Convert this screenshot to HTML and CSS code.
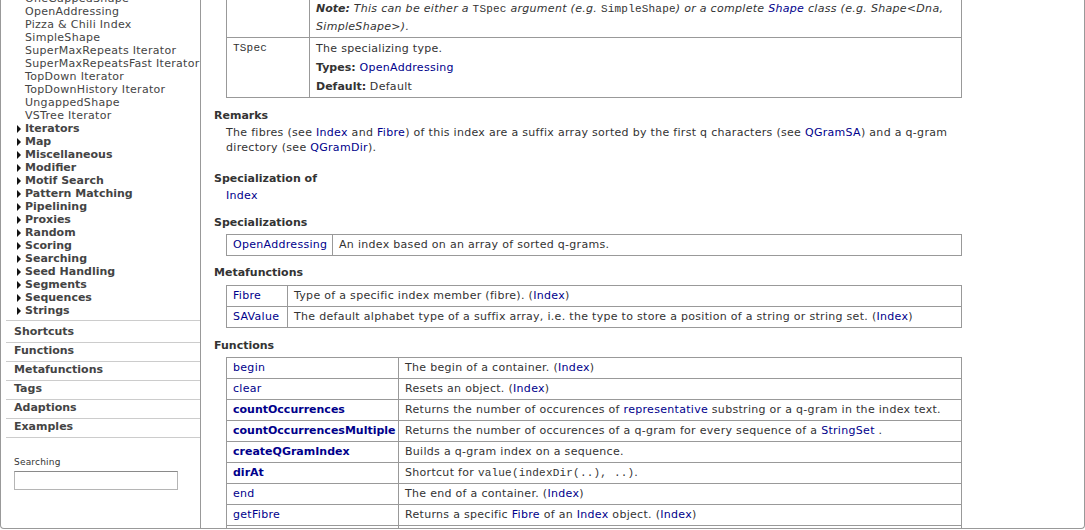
FILE: index.html
```html
<!DOCTYPE html>
<html>
<head>
<meta charset="utf-8">
<link rel="stylesheet" href="styles.css">
</head>
<body>
<div class="frame">
  <aside class="sidebar">
    <ul class="tree">
      <li>OneGappedShape</li>
      <li>OpenAddressing</li>
      <li>Pizza &amp; Chili Index</li>
      <li>SimpleShape</li>
      <li>SuperMaxRepeats Iterator</li>
      <li>SuperMaxRepeatsFast Iterator</li>
      <li>TopDown Iterator</li>
      <li>TopDownHistory Iterator</li>
      <li>UngappedShape</li>
      <li>VSTree Iterator</li>
      <li class="cat">Iterators</li>
      <li class="cat">Map</li>
      <li class="cat">Miscellaneous</li>
      <li class="cat">Modifier</li>
      <li class="cat">Motif Search</li>
      <li class="cat">Pattern Matching</li>
      <li class="cat">Pipelining</li>
      <li class="cat">Proxies</li>
      <li class="cat">Random</li>
      <li class="cat">Scoring</li>
      <li class="cat">Searching</li>
      <li class="cat">Seed Handling</li>
      <li class="cat">Segments</li>
      <li class="cat">Sequences</li>
      <li class="cat">Strings</li>
    </ul>
    <ul class="sections">
      <li>Shortcuts</li>
      <li>Functions</li>
      <li>Metafunctions</li>
      <li>Tags</li>
      <li>Adaptions</li>
      <li>Examples</li>
    </ul>
    <div class="search">
      <label class="search-label">Searching</label>
      <input class="search-input" type="text">
    </div>
  </aside>
  <main class="main">
    <table class="tbl params">
      <colgroup><col class="c-param"><col></colgroup>
      <tr>
        <td class="name"></td>
        <td class="desc"><div class="note"><b>Note:</b> This can be either a <code>TSpec</code> argument (e.g. <code>SimpleShape</code>) or a complete <a href="#">Shape</a> class (e.g. Shape&lt;Dna, SimpleShape&gt;).</div></td>
      </tr>
      <tr>
        <td class="name"><code>TSpec</code></td>
        <td class="desc">
          <div class="line">The specializing type.</div>
          <div class="line kv"><b>Types:</b> <a href="#">OpenAddressing</a></div>
          <div class="line kv"><b>Default:</b> Default</div>
        </td>
      </tr>
    </table>

    <section class="sec">
      <h3 class="sec-title">Remarks</h3>
      <p class="para">The fibres (see <a href="#">Index</a> and <a href="#">Fibre</a>) of this index are a suffix array sorted by the first q characters (see <a href="#">QGramSA</a>) and a q-gram directory (see <a href="#">QGramDir</a>).</p>
    </section>

    <section class="sec">
      <h3 class="sec-title">Specialization of</h3>
      <div class="single"><a href="#">Index</a></div>
    </section>

    <section class="sec">
      <h3 class="sec-title">Specializations</h3>
      <table class="tbl list">
        <colgroup><col class="c-spec"><col></colgroup>
        <tr><td><a href="#">OpenAddressing</a></td><td>An index based on an array of sorted q-grams.</td></tr>
      </table>
    </section>

    <section class="sec sec-tight">
      <h3 class="sec-title">Metafunctions</h3>
      <table class="tbl list">
        <colgroup><col class="c-meta"><col></colgroup>
        <tr><td><a href="#">Fibre</a></td><td>Type of a specific index member (fibre). (<a href="#">Index</a>)</td></tr>
        <tr><td><a href="#">SAValue</a></td><td>The default alphabet type of a suffix array, i.e. the type to store a position of a string or string set. (<a href="#">Index</a>)</td></tr>
      </table>
    </section>

    <section class="sec">
      <h3 class="sec-title">Functions</h3>
      <table class="tbl list">
        <colgroup><col class="c-func"><col></colgroup>
        <tr><td><a href="#">begin</a></td><td>The begin of a container. (<a href="#">Index</a>)</td></tr>
        <tr><td><a href="#">clear</a></td><td>Resets an object. (<a href="#">Index</a>)</td></tr>
        <tr><td><a class="strong" href="#">countOccurrences</a></td><td>Returns the number of occurences of <a href="#">representative</a> substring or a q-gram in the index text.</td></tr>
        <tr><td><a class="strong" href="#">countOccurrencesMultiple</a></td><td>Returns the number of occurences of a q-gram for every sequence of a <a href="#">StringSet</a> .</td></tr>
        <tr><td><a class="strong" href="#">createQGramIndex</a></td><td>Builds a q-gram index on a sequence.</td></tr>
        <tr><td><a class="strong" href="#">dirAt</a></td><td>Shortcut for <code>value(indexDir(..), ..)</code>.</td></tr>
        <tr><td><a href="#">end</a></td><td>The end of a container. (<a href="#">Index</a>)</td></tr>
        <tr><td><a href="#">getFibre</a></td><td>Returns a specific <a href="#">Fibre</a> of an <a href="#">Index</a> object. (<a href="#">Index</a>)</td></tr>
        <tr><td>&nbsp;</td><td>&nbsp;</td></tr>
      </table>
    </section>
  </main>
</div>
</body>
</html>
```

FILE: styles.css
```css
html, body {
  margin: 0;
  padding: 0;
  height: 100%;
  overflow: hidden;
  background: #fff;
}

body {
  font-family: "DejaVu Sans", Verdana, sans-serif;
  font-size: 11px;
  letter-spacing: 0.3px;
  color: #333;
}

b, strong {
  letter-spacing: 0;
}

a {
  color: #00008b;
  text-decoration: none;
}

a.strong {
  font-weight: bold;
  letter-spacing: 0;
}

code {
  font-family: "Liberation Mono", "Courier New", monospace;
  font-size: 11px;
  font-style: normal;
  letter-spacing: 0.2px;
}

.frame {
  display: flex;
  width: 1085px;
  height: 529px;
  box-sizing: border-box;
  border: 1px solid #999;
  border-top: none;
  border-radius: 0 0 4px 4px;
  overflow: hidden;
}

/* ---------- sidebar ---------- */
.sidebar {
  flex: 0 0 200px;
  box-sizing: border-box;
  border-right: 1px solid #999;
  color: #444;
}

.tree {
  list-style: none;
  margin: -8px 0 0;
  padding: 0 0 0 24px;
  line-height: 13px;
}

.tree li {
  white-space: nowrap;
}

.tree .cat {
  display: flex;
  align-items: center;
  gap: 4px;
  margin-left: -8px;
  font-weight: bold;
  letter-spacing: 0;
}

.tree .cat::before {
  content: "";
  width: 0;
  height: 0;
  border-top: 4px solid transparent;
  border-bottom: 4px solid transparent;
  border-left: 4px solid #111;
}

.sections {
  list-style: none;
  margin: 3px 0 0 5px;
  padding: 3px 0 0;
  border-top: 1px solid #ccc;
}

.sections li {
  padding: 1px 0 3px 8px;
  line-height: 14px;
  font-weight: bold;
  letter-spacing: 0;
  border-bottom: 1px solid #ccc;
}

.search {
  display: flex;
  flex-direction: column;
  align-items: flex-start;
  padding: 18px 0 0 13px;
}

.search-label {
  font-size: 9px;
  line-height: 12px;
  color: #333;
  letter-spacing: 0.2px;
}

.search-input {
  margin: 3px 0 0;
  width: 164px;
  height: 19px;
  box-sizing: border-box;
  border: 1px solid #b5b5b5;
  border-top-color: #8a8a8a;
  padding: 0 2px;
  font: inherit;
}

/* ---------- main ---------- */
.main {
  flex: 1;
  min-width: 0;
  padding-left: 13px;
}

.tbl {
  border-collapse: collapse;
  table-layout: fixed;
  width: 736px;
  margin-left: 12px;
}

.tbl td {
  border: 1px solid #999;
  padding: 3px 6px;
  line-height: 14px;
  vertical-align: top;
}

.params {
  margin-top: -4px;
}

.c-param { width: 83px; }
.c-spec  { width: 106px; }
.c-meta  { width: 61px; }
.c-func  { width: 172px; }

.note {
  font-style: italic;
  line-height: 17px;
  margin-bottom: -1px;
}

.params .line {
  line-height: 15px;
}

.params .kv {
  margin-top: 4px;
}

.params td.name code {
  line-height: 15px;
}

.sec {
  display: flow-root;
  margin-top: 11px;
}

.sec-tight {
  margin-top: 10px;
}

.sec-title {
  margin: 0 0 2px;
  font-size: 11px;
  line-height: 14px;
  font-weight: bold;
  letter-spacing: 0;
  color: #333;
}

.sec .tbl {
  margin-top: 4px;
}

.sec-tight .tbl {
  margin-top: 5px;
}

.para {
  margin: 0 0 6px 12px;
  width: 735px;
  line-height: 15px;
}

.single {
  margin: 0 0 2px 12px;
  line-height: 15px;
}
```
